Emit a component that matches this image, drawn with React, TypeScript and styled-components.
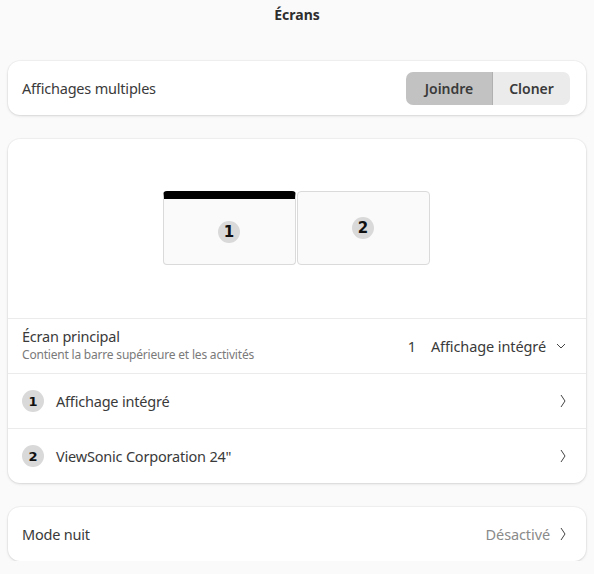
import React from "react";
import styled, { createGlobalStyle } from "styled-components";

const GlobalStyle = createGlobalStyle`
  html, body {
    margin: 0;
    padding: 0;
    background: #fafafa;
    font-family: "Noto Sans", "Open Sans", sans-serif;
    color: #2e2e2e;
  }
`;

const Page = styled.div`
  width: 594px;
  padding: 0 8px;
  box-sizing: border-box;
`;

const Title = styled.div`
  height: 28px;
  display: flex;
  align-items: center;
  justify-content: center;
  font-size: 14px;
  font-weight: 700;
  color: #2e2e2e;
`;

const Card = styled.div<{ $top: number }>`
  margin-top: ${(p) => p.$top}px;
  background: #fff;
  border-radius: 12px;
  box-shadow: 0 0 0 1px rgba(0, 0, 0, 0.03), 0 1px 3px rgba(0, 0, 0, 0.12);
  overflow: hidden;
`;

const Row = styled.div<{ $height?: number }>`
  height: ${(p) => p.$height ?? 54}px;
  display: flex;
  align-items: center;
  padding: 0 14px;
  box-sizing: border-box;
  border-top: 1px solid #ebebeb;
  &:first-child {
    border-top: none;
  }
`;

const Label = styled.div`
  flex: 1;
  font-size: 14.5px;
  color: #3a3a3a;
  letter-spacing: -0.2px;
`;

const Stack = styled.div`
  flex: 1;
  display: flex;
  flex-direction: column;
  margin-top: -3px;
`;

const Sub = styled.div`
  font-size: 12px;
  color: #7a7a7a;
  letter-spacing: -0.2px;
`;

const Segmented = styled.div`
  display: flex;
  height: 33px;
  border-radius: 7px;
  overflow: hidden;
  margin-right: 2px;
`;

const SegButton = styled.div<{ $active?: boolean }>`
  display: flex;
  align-items: center;
  justify-content: center;
  width: ${(p) => (p.$active ? 87 : 77)}px;
  box-sizing: border-box;
  font-size: 14px;
  font-weight: 600;
  color: #3a3a3a;
  background: ${(p) => (p.$active ? "#c2c2c2" : "#ebebeb")};
  border-right: ${(p) => (p.$active ? "1px solid #b0b0b0" : "none")};
`;

const Arrangement = styled.div`
  height: 179px;
  display: flex;
  justify-content: center;
  padding-top: 52px;
  padding-right: 2px;
  box-sizing: border-box;
  gap: 1px;
`;

const Monitor = styled.div<{ $primary?: boolean }>`
  width: 133px;
  height: 74px;
  box-sizing: border-box;
  border: 1px solid #dadada;
  border-radius: 4px;
  background: #fafafa;
  display: flex;
  flex-direction: column;
  align-items: center;
  ${(p) => p.$primary && "border-top: 8px solid #000;"}
`;

const Badge = styled.div<{ $size: number }>`
  width: ${(p) => p.$size}px;
  height: ${(p) => p.$size}px;
  border-radius: 50%;
  background: #d9d9d9;
  display: flex;
  align-items: center;
  justify-content: center;
  font-family: "DejaVu Sans", "Noto Sans", sans-serif;
  font-weight: 700;
  font-size: 15px;
  color: #111;
  flex-shrink: 0;
`;

const BadgeSlot = styled.div<{ $top: number }>`
  margin-top: ${(p) => p.$top}px;
`;

const Value = styled.div<{ $muted?: boolean }>`
  font-size: 14.5px;
  color: ${(p) => (p.$muted ? "#8a8a8a" : "#3a3a3a")};
  letter-spacing: -0.1px;
`;

const Num = styled.span`
  margin-right: 15px;
`;

const RowBadge = styled(Badge)`
  font-size: 13px;
  margin-right: 12px;
`;

const Chevron = styled.svg<{ $gap: number }>`
  flex-shrink: 0;
  margin-left: ${(p) => p.$gap}px;
  margin-right: 5px;
`;

const ChevronRight = ({ gap = 10 }: { gap?: number }) => (
  <Chevron $gap={gap} width="8" height="16" viewBox="0 0 8 16">
    <path d="M2 2 L6 8 L2 14" fill="none" stroke="#444" strokeWidth="1" />
  </Chevron>
);

const ChevronDown = () => (
  <Chevron $gap={9} width="12" height="8" viewBox="0 0 12 8">
    <path d="M2 2 L6 6 L10 2" fill="none" stroke="#444" strokeWidth="1" />
  </Chevron>
);

export default function App() {
  return (
    <Page>
      <GlobalStyle />
      <Title>Écrans</Title>
      <Card $top={33}>
        <Row>
          <Label>Affichages multiples</Label>
          <Segmented>
            <SegButton $active>Joindre</SegButton>
            <SegButton>Cloner</SegButton>
          </Segmented>
        </Row>
      </Card>
      <Card $top={24}>
        <Arrangement>
          <Monitor $primary>
            <BadgeSlot $top={22}>
              <Badge $size={22}>1</Badge>
            </BadgeSlot>
          </Monitor>
          <Monitor>
            <BadgeSlot $top={25}>
              <Badge $size={22}>2</Badge>
            </BadgeSlot>
          </Monitor>
        </Arrangement>
        <Row $height={55}>
          <Stack>
            <Label>Écran principal</Label>
            <Sub>Contient la barre supérieure et les activités</Sub>
          </Stack>
          <Value>
            <Num>1</Num>Affichage intégré
          </Value>
          <ChevronDown />
        </Row>
        <Row $height={55}>
          <RowBadge $size={22}>1</RowBadge>
          <Label>Affichage intégré</Label>
          <ChevronRight />
        </Row>
        <Row $height={55}>
          <RowBadge $size={22}>2</RowBadge>
          <Label>ViewSonic Corporation 24"</Label>
          <ChevronRight />
        </Row>
      </Card>
      <Card $top={24}>
        <Row>
          <Label>Mode nuit</Label>
          <Value $muted>Désactivé</Value>
          <ChevronRight gap={9} />
        </Row>
      </Card>
    </Page>
  );
}
